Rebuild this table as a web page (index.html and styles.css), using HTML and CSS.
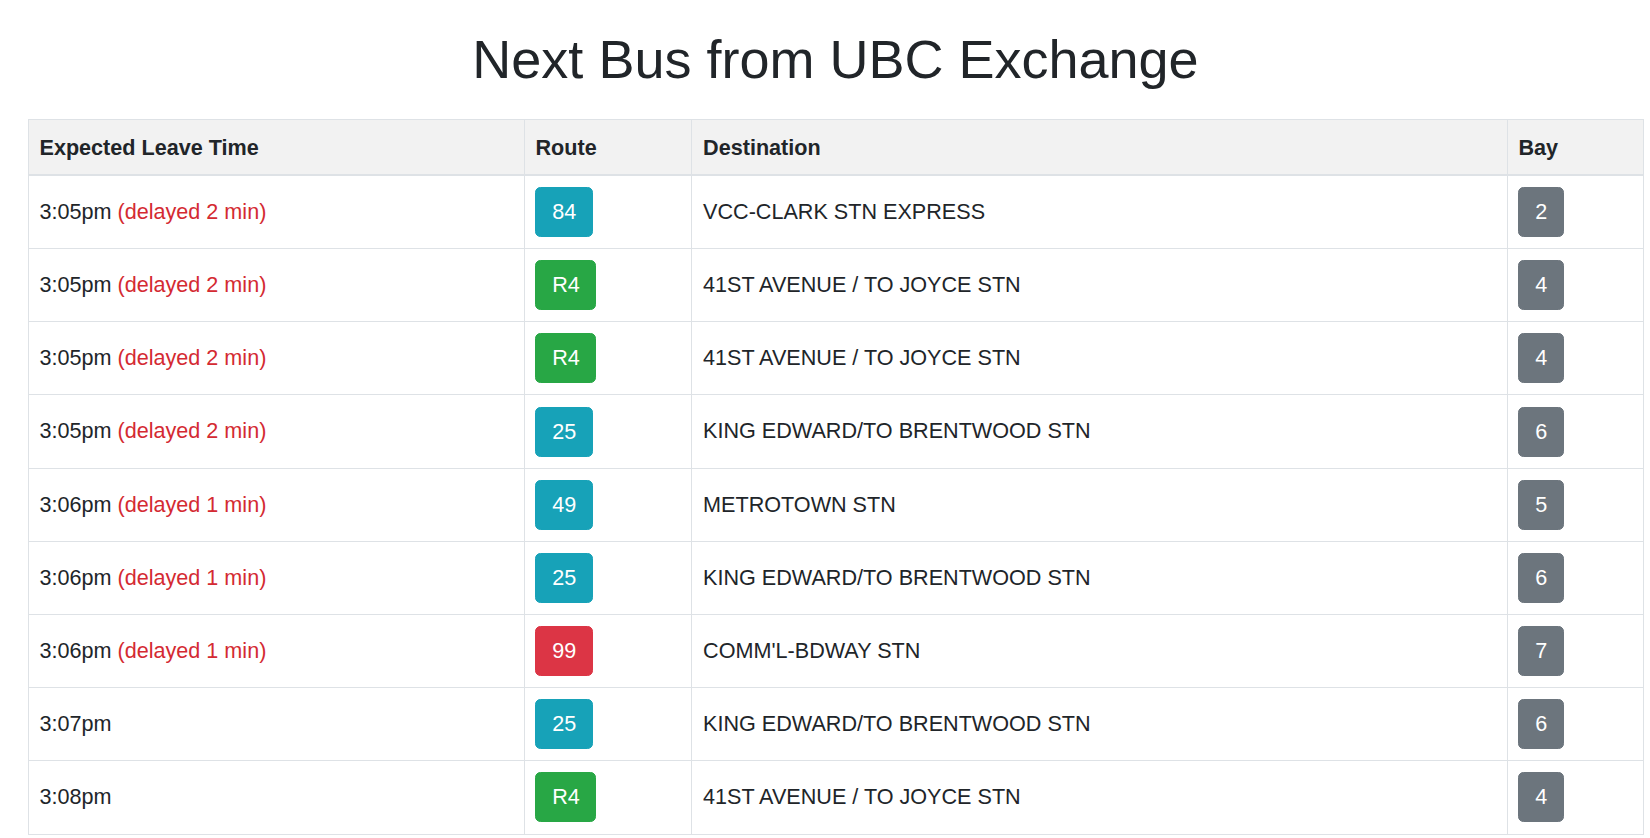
FILE: index.html
```html
<!DOCTYPE html>
<html lang="en">
<head>
<meta charset="utf-8">
<title>Next Bus from UBC Exchange</title>
<link rel="stylesheet" href="styles.css">
</head>
<body>
<div class="page">
  <h1 class="title">Next Bus from UBC Exchange</h1>
  <table class="buses">
    <colgroup>
      <col class="c-time">
      <col class="c-route">
      <col class="c-dest">
      <col class="c-bay">
    </colgroup>
    <thead>
      <tr>
        <th>Expected Leave Time</th>
        <th>Route</th>
        <th>Destination</th>
        <th>Bay</th>
      </tr>
    </thead>
    <tbody>
      <tr>
        <td>3:05pm <span class="delay">(delayed 2 min)</span></td>
        <td><span class="btn info">84</span></td>
        <td>VCC-CLARK STN EXPRESS</td>
        <td><span class="btn secondary">2</span></td>
      </tr>
      <tr>
        <td>3:05pm <span class="delay">(delayed 2 min)</span></td>
        <td><span class="btn success">R4</span></td>
        <td>41ST AVENUE / TO JOYCE STN</td>
        <td><span class="btn secondary">4</span></td>
      </tr>
      <tr>
        <td>3:05pm <span class="delay">(delayed 2 min)</span></td>
        <td><span class="btn success">R4</span></td>
        <td>41ST AVENUE / TO JOYCE STN</td>
        <td><span class="btn secondary">4</span></td>
      </tr>
      <tr>
        <td>3:05pm <span class="delay">(delayed 2 min)</span></td>
        <td><span class="btn info">25</span></td>
        <td>KING EDWARD/TO BRENTWOOD STN</td>
        <td><span class="btn secondary">6</span></td>
      </tr>
      <tr>
        <td>3:06pm <span class="delay">(delayed 1 min)</span></td>
        <td><span class="btn info">49</span></td>
        <td>METROTOWN STN</td>
        <td><span class="btn secondary">5</span></td>
      </tr>
      <tr>
        <td>3:06pm <span class="delay">(delayed 1 min)</span></td>
        <td><span class="btn info">25</span></td>
        <td>KING EDWARD/TO BRENTWOOD STN</td>
        <td><span class="btn secondary">6</span></td>
      </tr>
      <tr>
        <td>3:06pm <span class="delay">(delayed 1 min)</span></td>
        <td><span class="btn danger">99</span></td>
        <td>COMM'L-BDWAY STN</td>
        <td><span class="btn secondary">7</span></td>
      </tr>
      <tr>
        <td>3:07pm</td>
        <td><span class="btn info">25</span></td>
        <td>KING EDWARD/TO BRENTWOOD STN</td>
        <td><span class="btn secondary">6</span></td>
      </tr>
      <tr>
        <td>3:08pm</td>
        <td><span class="btn success">R4</span></td>
        <td>41ST AVENUE / TO JOYCE STN</td>
        <td><span class="btn secondary">4</span></td>
      </tr>
    </tbody>
  </table>
</div>
</body>
</html>
```

FILE: styles.css
```css
html, body {
  margin: 0;
  padding: 0;
  background: #ffffff;
}

body {
  font-family: "Liberation Sans", Arial, Helvetica, sans-serif;
  font-size: 21.6px;
  line-height: 32.4px;
  color: #212529;
}

.page {
  padding: 0 6.7px 0 27.7px;
}

.title {
  margin: 27.2px 0 27.3px;
  font-size: 54px;
  line-height: 64.8px;
  font-weight: 400;
  text-align: center;
  color: #212529;
}

.buses {
  width: 1615.6px;
  border-collapse: collapse;
  table-layout: fixed;
  border: 1px solid #dee2e6;
}

.c-time { width: 496px; }
.c-route { width: 167.6px; }
.c-dest { width: 815.4px; }
.c-bay { width: 136.6px; }

.buses th {
  background: #f2f2f2;
  font-weight: 700;
  text-align: left;
  padding: 11.6px 10.8px 9.6px;
  border: 1px solid #dee2e6;
  border-bottom-width: 2px;
  vertical-align: middle;
}

.buses td {
  padding: 11.1px 10.8px;
  border: 1px solid #dee2e6;
  vertical-align: middle;
  white-space: nowrap;
}

.delay {
  color: #d42a32;
}

.btn {
  display: inline-block;
  vertical-align: middle;
  padding: 8px 15.7px;
  line-height: 32px;
  border: 1px solid transparent;
  border-radius: 5.4px;
  color: #ffffff;
  text-align: center;
}

.info { background: #17a2b8; border-color: #17a2b8; }
.success { background: #28a745; border-color: #28a745; }
.danger { background: #dc3545; border-color: #dc3545; }
.secondary { background: #6c757d; border-color: #6c757d; }
```
